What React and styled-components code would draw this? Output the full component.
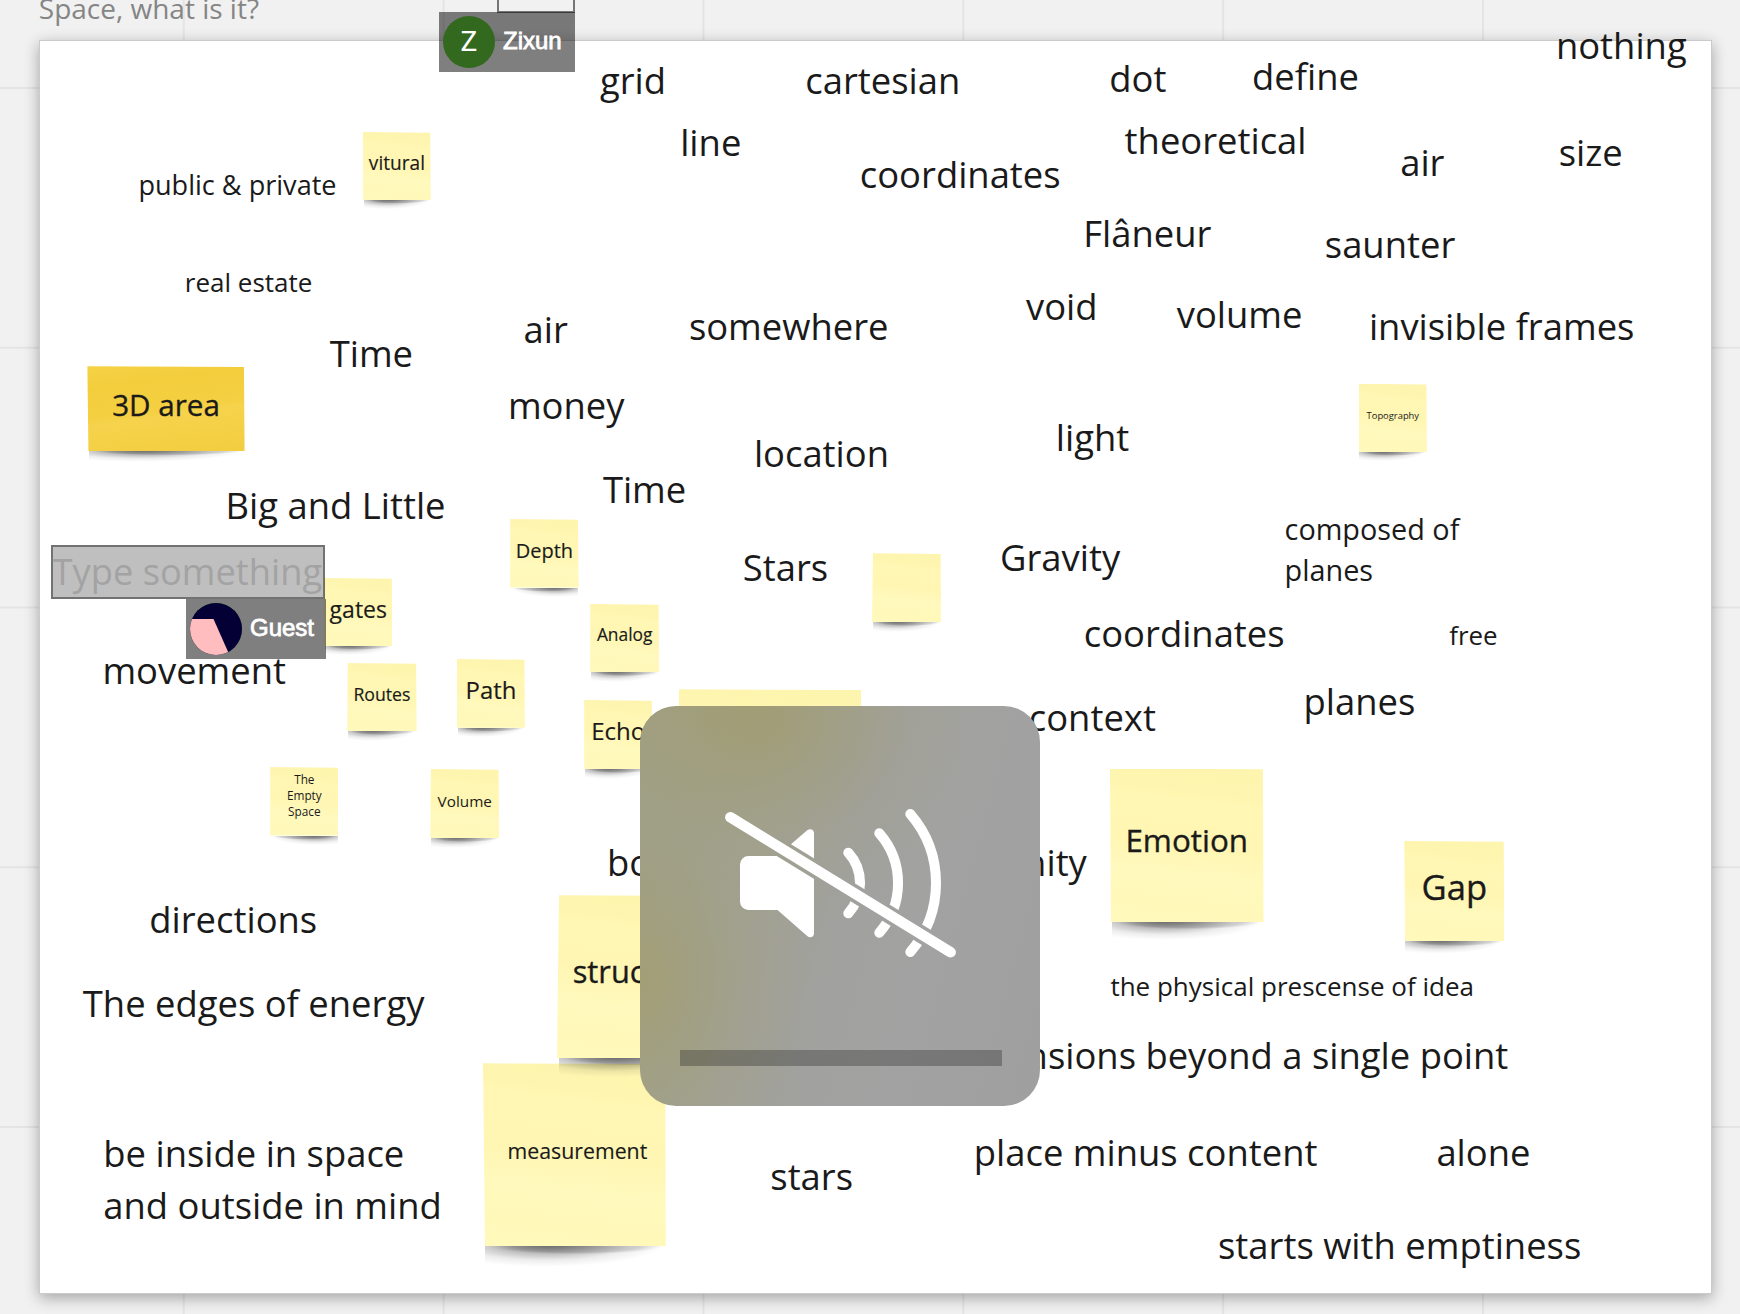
import React from "react";
import styled, { createGlobalStyle } from "styled-components";

const GlobalStyle = createGlobalStyle`
  * { box-sizing: border-box; }
  html, body { margin: 0; padding: 0; background: #f1f1f1; overflow: hidden; }
`;

/* Whole-pixel font metrics, so that a text's baseline lands on a given row */
const ascent = (size) => Math.round(size * 1.069);
const lineHeight = (size) => ascent(size) + Math.round(size * 0.293) + 2;

const Board = styled.main`
  position: relative;
  width: 1740px;
  height: 1314px;
  overflow: hidden;
  background-color: #f1f1f1;
  background-image: linear-gradient(to right, #e4e4e4 2px, transparent 2px),
    linear-gradient(to bottom, #e4e4e4 2px, transparent 2px);
  background-size: 259.85px 259.75px;
  background-position: 182.8px 87px;
  font-family: "Open Sans", "Noto Sans", sans-serif;
  color: #1a1a1a;
`;

const Frame = styled.section`
  position: absolute;
  left: 39px;
  top: 40px;
  width: 1673px;
  height: 1254px;
  background: #fff;
  border: 1.5px solid #cbcbcb;
  box-shadow: 0 4px 14px rgba(0, 0, 0, 0.32);
`;

const Word = styled.div`
  position: absolute;
  left: ${(p) => p.$x}px;
  top: ${(p) => Math.round(p.$y) - ascent(p.$size) - 1}px;
  font-size: ${(p) => p.$size}px;
  line-height: ${(p) => lineHeight(p.$size)}px;
  white-space: pre;
  color: ${(p) => p.$color || "#1a1a1a"};
`;

const Sticky = styled.div`
  position: absolute;
  left: ${(p) => p.$x}px;
  top: ${(p) => p.$y}px;
  width: ${(p) => p.$w}px;
  height: ${(p) => p.$h}px;

  &::after {
    content: "";
    position: absolute;
    left: 1%;
    right: 1%;
    top: 100%;
    height: ${(p) => 3 + p.$h * 0.11}px;
    background: radial-gradient(
        ellipse 66% 100% at ${(p) => (p.$lean > 0 ? "66% -10%" : "34% -10%")},
        rgba(0, 0, 0, 0.52),
        rgba(0, 0, 0, 0.26) 42%,
        rgba(0, 0, 0, 0.07) 72%,
        transparent
      ),
      radial-gradient(ellipse 48% 36% at 51% 0, rgba(0, 0, 0, 0.22), rgba(0, 0, 0, 0.14) 75%, transparent);
  }
`;

const Paper = styled.div`
  display: flex;
  justify-content: center;
  width: 100%;
  height: 100%;
  clip-path: polygon(
    ${(p) => (p.$tilt > 0 ? p.$tilt : 0)}px 0,
    calc(100% - 0.6px) 0.8px,
    100% 100%,
    ${(p) => (p.$tilt < 0 ? -p.$tilt : 0)}px 100%
  );
  background: ${(p) =>
    p.$gold
      ? "linear-gradient(172deg, #f5d246 0%, #f3cd3c 22%, #f4d042 52%, #f6d34c 56%, #f3cd3f 100%)"
      : "linear-gradient(187deg, #fdf4ae 0%, #fef5b0 18%, #fff7b3 24%, #fff6b3 50%, #fff9bd 68%, #fff8b9 86%, #fff9bc 100%)"};
`;

const StickyText = styled.span`
  padding-top: ${(p) => p.$base - ascent(p.$size) - 1}px;
  font-size: ${(p) => p.$size}px;
  line-height: ${(p) => p.$lh || lineHeight(p.$size)}px;
  text-align: center;
  white-space: pre;
  margin-left: ${(p) => p.$dx || 0}px;
  -webkit-text-stroke: ${(p) => (p.$size > 25 ? 0.35 : p.$size > 16 ? 0.15 : 0)}px #1a1a1a;
`;

const EditBox = styled.div`
  position: absolute;
  left: 50.5px;
  top: 545px;
  width: 274.5px;
  height: 54px;
  border: 2px solid rgba(0, 0, 0, 0.4);
  background: rgba(0, 0, 0, 0.25);
  font-size: 36.3px;
  line-height: 49px;
  white-space: nowrap;
  color: #a3a3a3;
`;

const EditOutline = styled.div`
  position: absolute;
  left: 497px;
  top: -20px;
  width: 78px;
  height: 33px;
  border: 2px solid #757575;
`;

const UserTag = styled.div`
  position: absolute;
  left: ${(p) => p.$x}px;
  top: ${(p) => p.$y}px;
  width: ${(p) => p.$w}px;
  height: 60px;
  padding: 4px;
  display: flex;
  gap: 8px;
  background: rgba(0, 0, 0, 0.5);
`;

const Avatar = styled.div`
  width: 52px;
  height: 52px;
  flex: none;
  border-radius: 50%;
  overflow: hidden;
  display: flex;
  align-items: center;
  justify-content: center;
  background: #33691e;
  color: #fff;
  font: 400 28px/54px Roboto, sans-serif;
`;

const UserName = styled.span`
  font: 400 24px/49px "Liberation Sans", Arial, sans-serif;
  color: #fff;
  -webkit-text-stroke: 0.8px #fff;
`;

const VolumePanel = styled.div`
  position: absolute;
  left: 640px;
  top: 706px;
  width: 400px;
  height: 400px;
  border-radius: 36px;
  overflow: hidden;
  display: flex;
  flex-direction: column;
  justify-content: space-between;
  background: radial-gradient(
      ellipse 260px 200px at 112px 10px,
      rgba(161, 155, 108, 0.75),
      rgba(161, 157, 116, 0.52) 30%,
      rgba(161, 159, 130, 0.22) 62%,
      transparent
    ),
    radial-gradient(
      ellipse 170px 240px at 0px 275px,
      rgba(163, 157, 110, 0.75),
      rgba(162, 158, 118, 0.52) 30%,
      rgba(161, 159, 130, 0.22) 62%,
      transparent
    ),
    linear-gradient(105deg, #a0a086 0%, #a1a191 30%, #a1a19e 50%, #a2a2a2 68%, #9f9f9f 100%);
`;

const VolumeArt = styled.svg`
  display: block;
  width: 400px;
  height: 330px;
`;

const VolumeBar = styled.div`
  width: 322px;
  height: 16px;
  margin: 0 0 40px 40px;
  background: rgba(0, 0, 0, 0.26);
`;

const S = 36.4;

const words = [
  ["Space, what is it?", 38.8, 18.7, 28, "#858585"],
  ["public & private", 138.4, 195.4, 27.1],
  ["real estate", 184.8, 292, 26],
  ["Time", 329.7, 367],
  ["air", 523.5, 343],
  ["money", 507.9, 418.7],
  ["grid", 599.9, 94],
  ["cartesian", 805.3, 94],
  ["dot", 1109.3, 92.4],
  ["line", 680.2, 155.7],
  ["coordinates", 859.8, 188],
  ["theoretical", 1124.6, 154],
  ["Flâneur", 1083.2, 247],
  ["somewhere", 688.9, 339.7],
  ["void", 1026, 320],
  ["define", 1252, 89.7],
  ["nothing", 1555.9, 59],
  ["air", 1400.2, 175.7],
  ["size", 1558.7, 165.7],
  ["saunter", 1324.8, 258],
  ["volume", 1176.8, 328],
  ["invisible frames", 1368.9, 339.7],
  ["Big and Little", 225.6, 519],
  ["movement", 102.4, 684],
  ["location", 753.9, 467],
  ["Time", 602.9, 502.7],
  ["Stars", 742.8, 580.7],
  ["Gravity", 1000, 571],
  ["light", 1055.8, 451],
  ["context", 1028.8, 730.7],
  ["boundary", 607, 875.7],
  ["infinity", 971.2, 875.7],
  ["composed of\nplanes", 1284.6, 540, 28.8],
  ["coordinates", 1083.8, 646.7],
  ["free", 1449.2, 644.7, 25.9],
  ["planes", 1303.6, 714.7],
  ["directions", 149.3, 933],
  ["The edges of energy", 82.8, 1017],
  ["be inside in space\nand outside in mind", 103.3, 1167],
  ["the physical prescense of idea", 1110.4, 995.7, 26],
  ["dimensions beyond a single point", 940, 1068.7],
  ["place minus content", 973.8, 1166],
  ["alone", 1436.4, 1166],
  ["starts with emptiness", 1218, 1259],
  ["stars", 770.3, 1190],
];

/* base: text baseline measured from the top edge of the note */
const notes = [
  { t: "vitural", x: 363, y: 132, w: 67.8, h: 68, s: 19.1, base: 38 },
  { t: "3D area", x: 87.4, y: 366.3, w: 157.2, h: 84.7, s: 29.6, base: 50, gold: true, tilt: -1 },
  { t: "Topography", x: 1358.7, y: 383.7, w: 68.3, h: 68.3, s: 9.4, base: 35.3 },
  { t: "Depth", x: 510.2, y: 519, w: 68.4, h: 68.6, s: 20, base: 38.6, lean: 1 },
  { t: "gates", x: 324.2, y: 578, w: 68.2, h: 68, s: 23, base: 40 },
  { t: "Analog", x: 590.2, y: 604, w: 69, h: 68.3, s: 17.4, base: 37 },
  { t: "Routes", x: 347.2, y: 663, w: 69.5, h: 68.3, s: 17.7, base: 38, tilt: 0.6 },
  { t: "Path", x: 456.9, y: 659, w: 68.1, h: 68.8, s: 23.9, base: 40 },
  { t: "Echo", x: 584.2, y: 700, w: 68.2, h: 69, s: 24, base: 40 },
  { t: "The\nEmpty\nSpace", x: 270.2, y: 767, w: 68.3, h: 68.5, s: 11.8, lh: 16, base: 18, lean: 1 },
  { t: "Volume", x: 430.3, y: 769, w: 68.9, h: 69.3, s: 15.3, base: 38, tilt: 0.6 },
  { t: "", x: 872, y: 553.3, w: 69.2, h: 69.2, s: 18, base: 38, tilt: 1 },
  { t: "", x: 679, y: 689.3, w: 182.6, h: 182, s: 18, base: 38 },
  { t: "measurement", x: 483, y: 1063.3, w: 182.8, h: 182.9, s: 21.3, base: 95.7, tilt: -2, dx: 6 },
  { t: "structure", x: 557, y: 895.3, w: 163, h: 163, s: 30.8, base: 87.7, tilt: 2 },
  { t: "Emotion", x: 1110, y: 768.5, w: 153.5, h: 153.8, s: 31.4, base: 83.2, tilt: -1 },
  { t: "Gap", x: 1404.3, y: 841, w: 100, h: 100, s: 34.6, base: 59, tilt: -0.8 },
];

function Note({ n }) {
  return (
    <Sticky $x={n.x} $y={n.y} $w={n.w} $h={n.h} $lean={n.lean}>
      <Paper $gold={n.gold} $tilt={n.tilt || 0}>
        {n.t && (
          <StickyText $size={n.s} $base={n.base} $lh={n.lh} $dx={n.dx}>
            {n.t}
          </StickyText>
        )}
      </Paper>
    </Sticky>
  );
}

function MutedSpeaker() {
  return (
    <VolumeArt viewBox="0 0 400 330" fill="none">
      <defs>
        <mask id="slashGap" maskUnits="userSpaceOnUse" x="0" y="0" width="400" height="330">
          <rect width="400" height="330" fill="#fff" />
          <path d="M73.3 100.9L327.7 256.7" stroke="#000" strokeWidth="17.6" />
        </mask>
      </defs>
      <g mask="url(#slashGap)">
        <path
          fill="#fff"
          d="M108.5 150H137.3L167.2 124.3C170 122 174 123.4 174 127V227.5C174 231 170 232.4 167.2 230L137.5 204H108.5A8.5 8.5 0 0 1 100 195.5V158.5A8.5 8.5 0 0 1 108.5 150Z"
        />
        <g stroke="#fff" strokeWidth="10" strokeLinecap="round">
          <path d="M208.3 146.7A45 45 0 0 1 208.3 207.3" />
          <path d="M239.3 127.3A75.4 75.4 0 0 1 239.3 226.8" />
          <path d="M270.3 108A105.5 105.5 0 0 1 270.3 246" />
        </g>
      </g>
      <path d="M90.4 111.3L310.6 246.2" stroke="#fff" strokeWidth="10.6" strokeLinecap="round" />
    </VolumeArt>
  );
}

export default function App() {
  return (
    <>
      <GlobalStyle />
      <Board>
        <Frame />
        {notes.map((n, i) => (
          <Note key={i} n={n} />
        ))}
        {words.map(([text, x, y, size, color], i) => (
          <Word key={i} $x={x} $y={y} $size={size || S} $color={color}>
            {text}
          </Word>
        ))}
        <EditOutline />
        <UserTag $x={439} $y={12} $w={136}>
          <Avatar>Z</Avatar>
          <UserName>Zixun</UserName>
        </UserTag>
        <EditBox>Type something</EditBox>
        <UserTag $x={186} $y={599} $w={140}>
          <Avatar>
            <svg width="52" height="52" viewBox="0 0 52 52">
              <rect width="52" height="52" fill="#040036" />
              <path d="M0 16H23.5L43 60H0Z" fill="#ffbdbf" />
            </svg>
          </Avatar>
          <UserName>Guest</UserName>
        </UserTag>
        <VolumePanel>
          <MutedSpeaker />
          <VolumeBar />
        </VolumePanel>
      </Board>
    </>
  );
}
